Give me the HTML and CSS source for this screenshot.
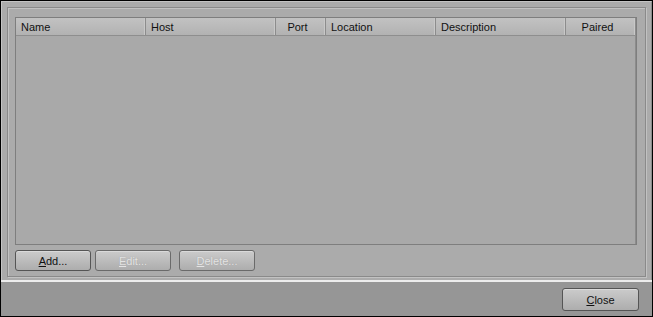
FILE: index.html
```html
<!DOCTYPE html>
<html lang="en">
<head>
  <meta charset="UTF-8">
  <title>Servers</title>
  <link rel="stylesheet" href="styles.css">
</head>
<body>
  <div class="window">
    <div class="main">
      <div class="group">
        <div class="list">
          <div class="list-head">
            <div class="col col-name">Name</div>
            <div class="col col-host">Host</div>
            <div class="col col-port center">Port</div>
            <div class="col col-loc">Location</div>
            <div class="col col-desc">Description</div>
            <div class="col col-paired center">Paired</div>
          </div>
          <div class="list-body"></div>
        </div>
        <div class="actions">
          <button class="btn"><u>A</u>dd...</button>
          <button class="btn" disabled><u>E</u>dit...</button>
          <button class="btn gap" disabled><u>D</u>elete...</button>
        </div>
      </div>
    </div>
    <div class="footer">
      <button class="btn"><u>C</u>lose</button>
    </div>
  </div>
</body>
</html>
```

FILE: styles.css
```css
html,
body {
  margin: 0;
  padding: 0;
  background: #000;
}

.window {
  width: 651px;
  height: 315px;
  border: 1px solid #000;
  display: flex;
  flex-direction: column;
  font-family: "Liberation Sans", Arial, sans-serif;
  font-size: 11px;
  color: #111;
}

.main {
  background: #ababab;
  height: 279px;
  box-sizing: border-box;
  padding: 5px 5px 0 5px;
  border: 1px solid #c4c4c4;
  border-right-color: #8c8c8c;
  border-bottom: none;
}

.group {
  border: 1px solid #8a8a8a;
  box-shadow: inset 1px 1px 0 #c2c2c2, 1px 1px 0 #c2c2c2;
  padding: 9px 8px 5px 7px;
  height: 270px;
  box-sizing: border-box;
}

.list {
  border: 1px solid #7e7e7e;
  height: 228px;
  box-sizing: border-box;
  background: #a9a9a9;
  display: flex;
  flex-direction: column;
}

.list-head {
  display: flex;
  height: 17px;
  border-bottom: 1px solid #8e8e8e;
  background: linear-gradient(#c2c2c2, #b2b2b2);
}

.col {
  box-sizing: border-box;
  padding: 3px 0 0 5px;
  border-right: 1px solid #8c8c8c;
  box-shadow: inset -1px 0 0 #c8c8c8;
  white-space: nowrap;
}

.center {
  text-align: center;
  padding-left: 0;
  padding-right: 6px;
}

.col-name { width: 130px; }
.col-host { width: 130px; }
.col-port { width: 50px; }
.col-loc { width: 110px; }
.col-desc { width: 130px; }
.col-paired { width: 70px; }

.list-body {
  flex: 1;
  box-shadow: inset -1px 0 0 #8c8c8c;
}

.actions {
  display: flex;
  gap: 4px;
  padding-top: 5px;
}

.btn {
  width: 76px;
  height: 21px;
  border: 1px solid #555;
  border-radius: 3px;
  background: linear-gradient(#cbcbcb, #adadad);
  box-shadow: inset 0 1px 0 #dadada;
  font-family: "Liberation Sans", Arial, sans-serif;
  font-size: 11px;
  color: #111;
  padding: 0;
}

.btn:disabled {
  color: #e4e4e4;
  border-color: #6a6a6a;
  text-shadow: 0 0 1px #9a9a9a;
}

.gap {
  margin-left: 4px;
}

.footer {
  flex: 1;
  background: #969696;
  border-top: 2px solid #ececec;
  display: flex;
  justify-content: flex-end;
  align-items: flex-start;
  padding: 6px 13px 0 0;
}

.footer .btn {
  width: 77px;
  height: 23px;
}
```
